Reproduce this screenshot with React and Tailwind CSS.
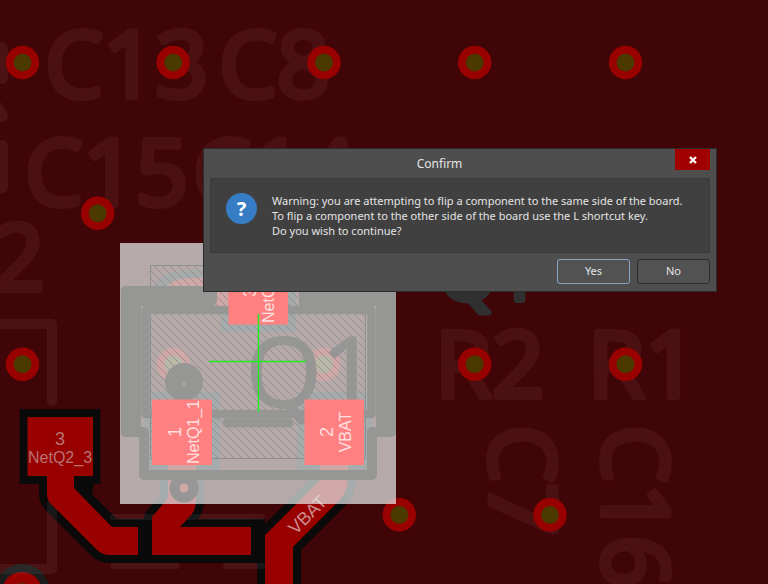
import { useState } from 'react';

const VIAS = [
    [22.5, 62.5], [173.2, 62.5], [324, 62.5], [474.7, 62.5], [625.5, 62.5],
    [97.7, 213.3],
    [22.5, 364.2], [173.2, 364.2], [324, 364.2], [474.7, 364.2], [625.5, 364.2],
    [399.3, 514.8], [550, 514.8],
];

const LABELS = [
    { text: 'C13', x: 45, y: 97 },
    { text: 'C8', x: 219, y: 97 },
    { text: 'C15', x: 25, y: 205 },
    { text: 'C14', x: 193, y: 205 },
    { text: '2', x: -8, y: 290 },
    { text: 'R2', x: 435, y: 397 },
    { text: 'R1', x: 588, y: 397 },
    { text: 'C7', x: 490, y: 425, rotate: 90 },
    { text: 'C16', x: 603, y: 425, rotate: 90 },
];

const PAD_1_TRACE = 'M168 465 V498 L152 517 V555 H251 V527 H180 L192 514 Q196 509 196 500 V465 Z';
const PAD_2_TRACE = 'M279 600 V541 L329 491 Q334 486 334 478 V460';
const Q2_TRACE = 'M47 470 H74 V488 L112 527 H138 V555 H110 Q102 555 97 550 L51 504 Q47 500 47 494 Z';

const Silk = ({ text, x, y, rotate = 0, weight = 6, className }) => (
    <text
        transform={`translate(${x} ${y}) rotate(${rotate})`}
        className={`font-['Open_Sans',sans-serif] ${className}`}
        strokeWidth={weight}
        strokeLinejoin="round"
    >
        {text}
    </text>
);

const NetLabel = ({ children, x, y, rotate = 0, className = 'text-[16px] fill-[#ffe0e0]' }) => (
    <text
        transform={`translate(${x} ${y}) rotate(${rotate})`}
        textAnchor="middle"
        className={`font-['Liberation_Sans',sans-serif] ${className}`}
    >
        {children}
    </text>
);

const Via = ({ x, y }) => (
    <g>
        <circle cx={x} cy={y} r="16.7" fill="#990000" />
        <circle cx={x} cy={y} r="9" fill="#4c3900" />
    </g>
);

const Board = () => (
    <svg
        className="absolute inset-0 h-full w-full"
        viewBox="0 0 768 584"
        preserveAspectRatio="xMinYMin slice"
        aria-label="PCB layout"
    >
        <defs>
            <pattern id="hatch" width="8" height="8" patternUnits="userSpaceOnUse">
                <path d="M-1 -1 L9 9 M-1 7 L1 9 M7 -1 L9 1" stroke="#8f8888" strokeWidth="0.8" />
            </pattern>
        </defs>
        <rect width="768" height="584" fill="#400506" />

        {/* Silkscreen designators */}
        {LABELS.map((label) => (
            <Silk
                key={label.text}
                {...label}
                className="text-[92px] fill-[#4b1011] stroke-[#4b1011]"
            />
        ))}
        <Silk text="Q1" x={439} y={300} className="text-[74px] fill-[#303030] stroke-[#303030]" />

        {/* Copper clearance */}
        <g fill="#0a0a0a" stroke="#0a0a0a">
            <rect x="19.5" y="409" width="81" height="75" stroke="none" />
            <path d={Q2_TRACE} strokeWidth="16" strokeLinejoin="round" />
            <path d="M74 480 H95 L92 494 L118 520 H100 Z" stroke="none" />
            <path d="M112 519 H265 V563 H112 Z" stroke="none" />
            <path d={PAD_1_TRACE} strokeWidth="16" strokeLinejoin="round" />
            <path d={PAD_2_TRACE} fill="none" strokeWidth="44" />
            <path d="M168 306 Q170 292 190 292 H240" fill="none" strokeWidth="44" />
            <rect x="145" y="392" width="75" height="78" stroke="none" />
            <rect x="297" y="392" width="75" height="78" stroke="none" />
            <rect x="221" y="255" width="75" height="77" stroke="none" />
        </g>
        <circle cx="22" cy="592" r="28" fill="#1c1c1c" />
        <circle cx="22" cy="592" r="20" fill="#990000" />
        <circle cx="22" cy="592" r="9" fill="#4c3900" />

        {/* Part outlines */}
        <g fill="none" stroke="#ffffff" strokeOpacity="0.06" strokeLinecap="round" strokeLinejoin="round">
            <path d="M0 324 H52 V401" strokeWidth="10" />
            <path d="M52 505 V569 H-4" strokeWidth="10" />
            <path d="M113 517 H262 M113 566 H177 M226 566 H262" strokeWidth="6" />
            <path d="M2 48 V78 M-4 106 L2 116 M2 146 V187" strokeWidth="12" />
        </g>

        <g fill="#990000">
            <rect x="27.5" y="417" width="65.5" height="59" />
            <path d={Q2_TRACE} />
            <path d={PAD_1_TRACE} />
            <path d={PAD_2_TRACE} fill="none" stroke="#990000" strokeWidth="28" />
            <path d="M172 306 Q174 292 190 292 H240" fill="none" stroke="#990000" strokeWidth="28" />
        </g>
        {VIAS.map(([x, y]) => (
            <Via key={`${x}-${y}`} x={x} y={y} />
        ))}
        <NetLabel x={60} y={445} className="text-[18px] fill-[#b87373]">3</NetLabel>
        <NetLabel x={60} y={463} className="text-[16px] fill-[#b87373]">NetQ2_3</NetLabel>
        <NetLabel x={312} y={519} rotate={-45} className="text-[18px] fill-[#c98c8c]">VBAT</NetLabel>

        {/* Selected component */}
        <rect x="120" y="243" width="276" height="261" fill="#e8f0f0" fillOpacity="0.7" />
        <rect x="150.5" y="265.5" width="215" height="193" fill="url(#hatch)" stroke="#8d9191" />
        <g fill="#969695">
            <rect x="121" y="286" width="20" height="151" rx="5" />
            <rect x="121" y="286" width="96" height="20" rx="5" />
            <rect x="376" y="286" width="20" height="151" rx="5" />
            <rect x="299" y="286" width="97" height="20" rx="3" />
            <circle cx="184" cy="382" r="19" />
        </g>
        <g fill="none" stroke="#969695" strokeLinejoin="round" strokeLinecap="round">
            <rect x="145.5" y="310" width="226" height="104" strokeWidth="8.5" />
            <path d="M126 432 H144 V475 H372 V432 H391" strokeWidth="10" />
            <path d="M227 423 H289" strokeWidth="9" />
            <circle cx="184" cy="488" r="9.5" strokeWidth="10" />
        </g>
        <circle cx="184" cy="384" r="1.5" fill="#b6aaaa" />
        <Silk text="Q1" x={246} y={407} weight={2} className="text-[97px] fill-[#969695] stroke-[#969695]" />

        <g fill="#ff8080">
            <rect x="152" y="399.5" width="60" height="65.5" />
            <rect x="304.5" y="399.5" width="59.5" height="65.5" />
            <rect x="228.5" y="260" width="59.5" height="64.5" />
        </g>
        <NetLabel x={181} y={432} rotate={-90} className="text-[18px] fill-[#ffe0e0]">1</NetLabel>
        <NetLabel x={199} y={432} rotate={-90}>NetQ1_1</NetLabel>
        <NetLabel x={333} y={432} rotate={-90} className="text-[18px] fill-[#ffe0e0]">2</NetLabel>
        <NetLabel x={351} y={432} rotate={-90}>VBAT</NetLabel>
        <NetLabel x={256} y={292} rotate={-90} className="text-[18px] fill-[#ffe0e0]">3</NetLabel>
        <NetLabel x={274} y={291} rotate={-90}>NetQ1_3</NetLabel>
        <path d="M209 361.5 H306 M258.5 314 V412" stroke="#1cf01c" strokeWidth="1.4" />
    </svg>
);

const ConfirmDialog = ({ onClose }) => (
    <div
        role="dialog"
        aria-labelledby="dialog-title"
        className="absolute left-[203px] top-[148px] w-[514px] border border-[#2b2d2d] bg-[#4e4e4e] pb-[7px] font-['Noto_Sans',sans-serif] text-[11px] text-[#e4e4e4]"
    >
        <div className="flex h-[29px] items-start pr-1.5">
            <h1 id="dialog-title" className="flex-1 pt-[7px] text-center text-[12px] leading-4">Confirm</h1>
            <button
                type="button"
                aria-label="Close"
                onClick={onClose}
                className="flex h-[21px] w-[35px] items-center justify-center bg-[#a00000]"
            >
                <svg className="h-2 w-2" viewBox="0 0 8 8">
                    <path d="M1 1 L7 7 M7 1 L1 7" stroke="#fff" strokeWidth="2.2" />
                </svg>
            </button>
        </div>
        <div className="mx-1.5 flex border border-[#393939] bg-[#404040] px-[15px] pb-[14px] pt-[14px]">
            <div className="flex h-[31px] w-[31px] shrink-0 items-center justify-center rounded-full bg-[#377dc6] text-[20px] font-bold leading-none text-white">
                ?
            </div>
            <p className="ml-[15px] whitespace-nowrap leading-[15px]">
                Warning: you are attempting to flip a component to the same side of the board.
                <br />
                To flip a component to the other side of the board use the L shortcut key.
                <br />
                Do you wish to continue?
            </p>
        </div>
        <div className="mx-1.5 mt-1.5 flex justify-end gap-[7px]">
            <button
                type="button"
                onClick={onClose}
                className="h-[25px] w-[73px] rounded-[3px] border border-[#86a4c5] bg-[#525252]"
            >
                Yes
            </button>
            <button
                type="button"
                onClick={onClose}
                className="h-[25px] w-[73px] rounded-[3px] border border-[#2c2c2c] bg-[#525252]"
            >
                No
            </button>
        </div>
    </div>
);

const App = () => {
    const [open, setOpen] = useState(true);

    return (
        <main className="relative min-h-screen overflow-hidden bg-[#400506]">
            <Board />
            {open && <ConfirmDialog onClose={() => setOpen(false)} />}
        </main>
    );
};

export default App;
